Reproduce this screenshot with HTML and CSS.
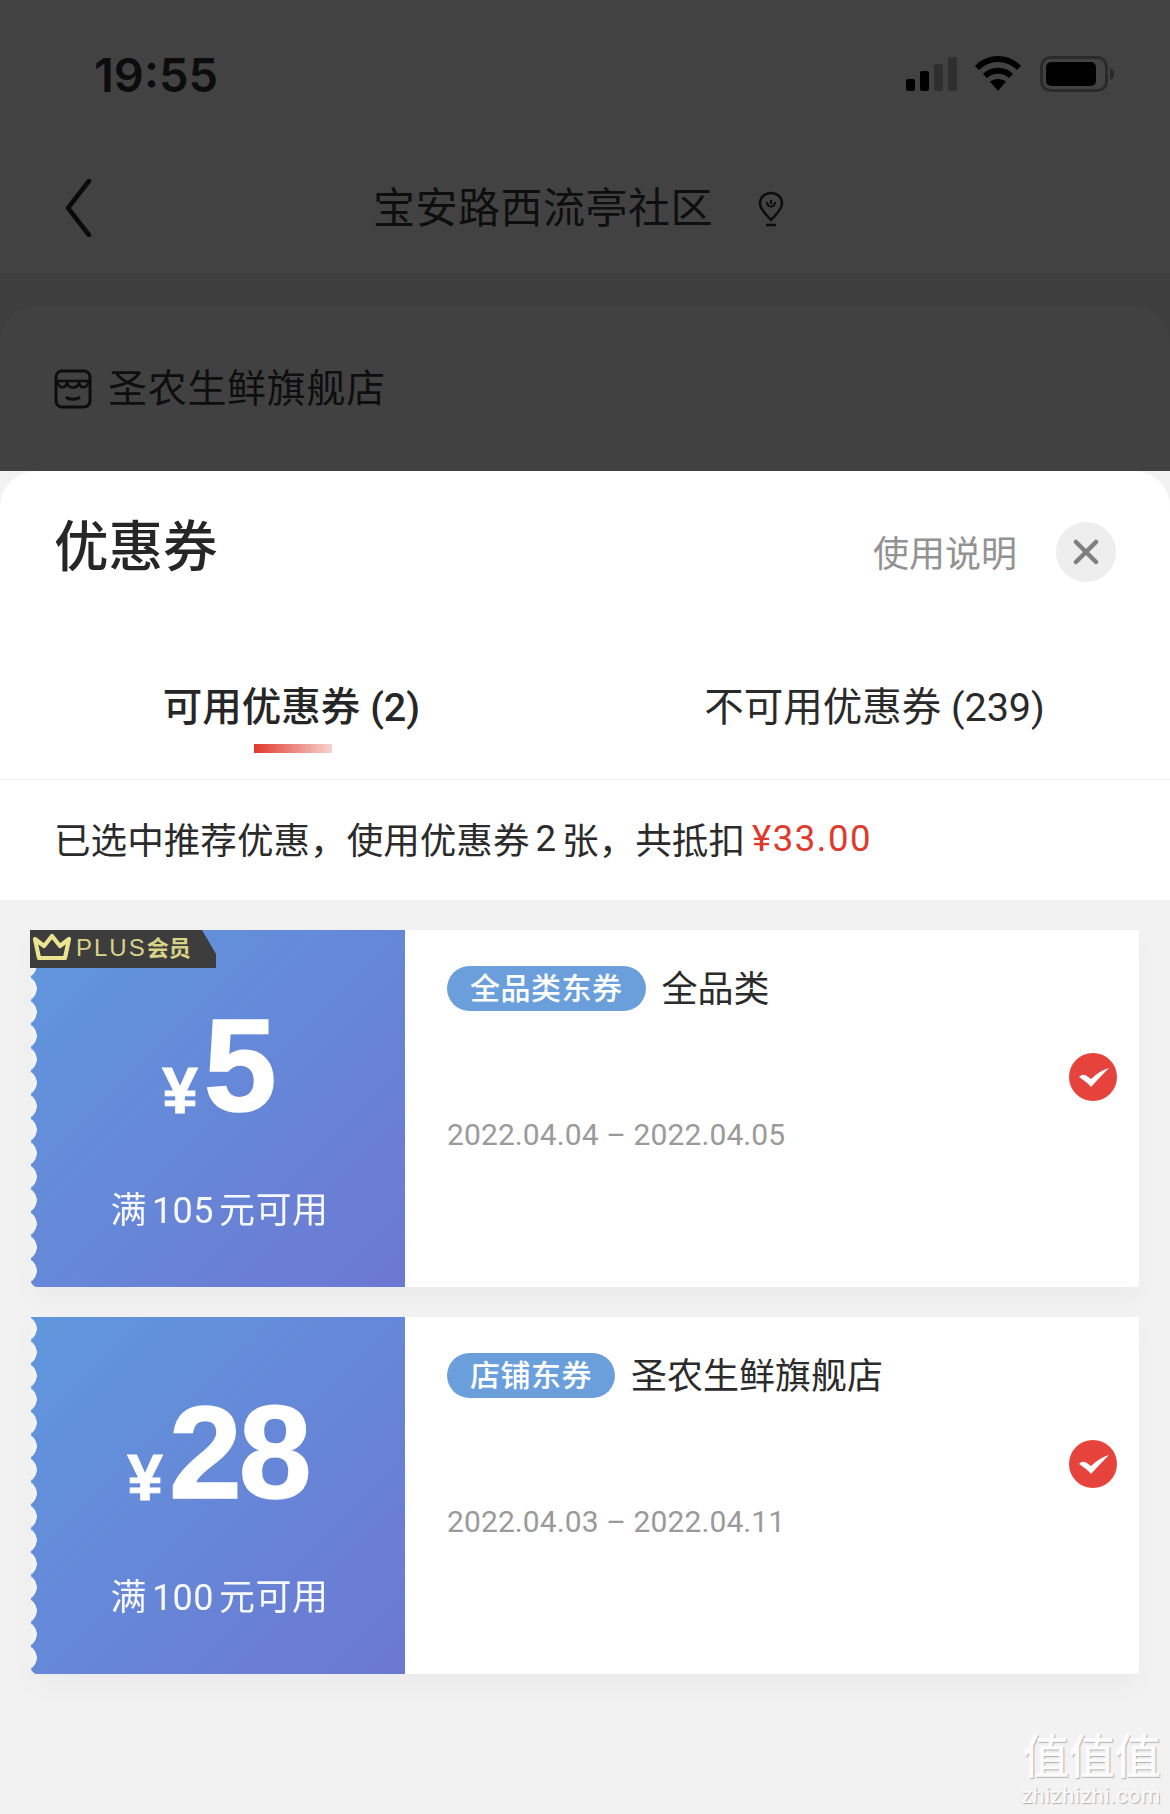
FILE: index.html
```html
<!DOCTYPE html>
<html lang="zh-CN">
<head>
<meta charset="utf-8">
<title>优惠券</title>
<link rel="stylesheet" href="styles.css">
</head>
<body>
<div class="page">
  <header class="backdrop">
    <div class="status">
      <span class="time">19:55</span>
      <div class="status-icons">
        <svg class="ic-signal" width="51" height="34" viewBox="0 0 51 34"><rect x="0" y="22" width="9" height="12" rx="2" fill="#000"/><rect x="14" y="14" width="9" height="20" rx="2" fill="#000"/><rect x="28" y="7" width="9" height="27" rx="2" fill="#2f2f2f"/><rect x="42" y="0" width="9" height="34" rx="2" fill="#2f2f2f"/></svg>
        <svg class="ic-wifi" width="48" height="37" viewBox="0 0 48 37"><path d="M3 13C15 1 33 1 45 13" fill="none" stroke="#000" stroke-width="6"/><path d="M11 21C18 14 30 14 37 21" fill="none" stroke="#000" stroke-width="6"/><path d="M16 26.500C20 23 28 23 32 26.500L24 36Z" fill="#000"/></svg>
        <svg class="ic-batt" width="74" height="36" viewBox="0 0 74 36"><rect x="1.500" y="1.500" width="65" height="33" rx="9" fill="none" stroke="#2a2a2a" stroke-width="3"/><rect x="6" y="6" width="50" height="24" rx="5" fill="#000"/><path d="M70 12C73 13 74 15 74 18C74 21 73 23 70 24Z" fill="#2a2a2a"/></svg>
      </div>
    </div>
    <nav class="nav">
      <svg class="ic-back" width="28" height="58" viewBox="0 0 28 58"><path d="M25 2L4 29L25 56" fill="none" stroke="#0a0a0a" stroke-width="4.500" stroke-linecap="round" stroke-linejoin="round"/></svg>
      <h2 class="nav-title">宝安路西流亭社区</h2>
      <svg class="ic-pin" width="30" height="36" viewBox="0 0 30 36"><path d="M15 2C8 2 4 7 4 12.500C4 19 11 24 15 29C19 24 26 19 26 12.500C26 7 22 2 15 2Z" fill="none" stroke="#0d0d0d" stroke-width="2.500"/><path d="M11 11C11 17 19 17 19 11M15 9V13" fill="none" stroke="#0d0d0d" stroke-width="2.200"/><path d="M10 34H20" stroke="#0d0d0d" stroke-width="2.500"/></svg>
    </nav>
    <div class="store-wrap">
      <div class="store">
        <svg class="ic-store" width="38" height="40" viewBox="0 0 38 40"><rect x="2" y="2" width="34" height="36" rx="6" fill="none" stroke="#0d0d0d" stroke-width="3"/><path d="M2 12H36M3 12C5 20 11 20 13 14C15 20 23 20 25 14C27 20 33 20 35 12" fill="none" stroke="#0d0d0d" stroke-width="2.600"/><path d="M12 28C15 31 23 31 26 28" fill="none" stroke="#0d0d0d" stroke-width="3"/></svg>
        <span class="store-name">圣农生鲜旗舰店</span>
      </div>
    </div>
  </header>

  <main class="sheet">
    <div class="sheet-head">
      <h1 class="sheet-title">优惠券</h1>
      <span class="help">使用说明</span>
      <button class="close" type="button" aria-label="关闭">
        <svg width="26" height="26" viewBox="0 0 26 26"><path d="M3 3L23 23M23 3L3 23" stroke="#7f7f7f" stroke-width="4.500" stroke-linecap="round"/></svg>
      </button>
    </div>
    <div class="tabs">
      <div class="tab tab-on"><span class="tab-label">可用优惠券 (2)</span><i class="tab-bar"></i></div>
      <div class="tab"><span class="tab-label">不可用优惠券 (239)</span></div>
    </div>
    <div class="summary">已选中推荐优惠，使用优惠券<span class="num">2</span>张，共抵扣<span class="amount">¥33.00</span></div>
    <div class="list">
      <article class="coupon">
        <div class="badge">
          <svg width="40" height="28" viewBox="0 0 40 28"><path d="M3 6L12 13L20 3L28 13L37 6L33 25H7Z" fill="none" stroke="#ebe491" stroke-width="4.200" stroke-linejoin="round"/></svg>
          <span class="badge-text">PLUS<b>会员</b></span>
        </div>
        <div class="face">
          <div class="value"><span class="yen">¥</span><span class="figure">5</span></div>
          <div class="rule">满<span class="num">105</span>元可用</div>
        </div>
        <div class="detail">
          <div class="info">
            <div class="heading"><span class="tag">全品类东券</span><span class="scope">全品类</span></div>
            <div class="dates">2022.04.04 – 2022.04.05</div>
          </div>
          <svg class="check" width="48" height="48" viewBox="0 0 48 48"><circle cx="24" cy="24" r="24" fill="#e5433b"/><path d="M10 24Q13 20.500 17 22.500L22 26Q30 18 40 15Q32 23 22 34Q19 30 10 24Z" fill="#fff"/></svg>
        </div>
      </article>
      <article class="coupon">
        <div class="face">
          <div class="value"><span class="yen">¥</span><span class="figure">28</span></div>
          <div class="rule">满<span class="num">100</span>元可用</div>
        </div>
        <div class="detail">
          <div class="info">
            <div class="heading"><span class="tag">店铺东券</span><span class="scope">圣农生鲜旗舰店</span></div>
            <div class="dates">2022.04.03 – 2022.04.11</div>
          </div>
          <svg class="check" width="48" height="48" viewBox="0 0 48 48"><circle cx="24" cy="24" r="24" fill="#e5433b"/><path d="M10 24Q13 20.500 17 22.500L22 26Q30 18 40 15Q32 23 22 34Q19 30 10 24Z" fill="#fff"/></svg>
        </div>
      </article>
    </div>
  </main>

  <div class="watermark"><span class="wm-mark">值值值</span><span class="wm-url">zhizhizhi.com</span></div>
</div>
</body>
</html>
```
FILE: styles.css
```css
* { box-sizing: border-box; margin: 0; padding: 0; }
html, body { width: 1170px; height: 1814px; overflow: hidden; }
body {
  font-family: Roboto, "Noto Sans CJK SC", sans-serif;
  color: #262626;
  background: #f2f2f2;
}
.page { position: relative; width: 1170px; height: 1814px; display: flex; flex-direction: column; }

/* dimmed page behind the sheet */
.backdrop { height: 471px; flex: none; background: #424242; display: flex; flex-direction: column; }
.status { height: 146px; flex: none; display: flex; justify-content: space-between; align-items: flex-start; padding: 49px 56px 0 94px; }
.time { font-family: Inter, sans-serif; font-weight: 600; font-size: 47px; line-height: 52px; color: #0c0c0c; }
.status-icons { display: flex; align-items: flex-start; padding-top: 8px; }
.ic-wifi { margin-left: 17px; margin-top: -2px; }
.ic-batt { margin-left: 18px; margin-top: -1px; }
.nav { height: 127px; flex: none; display: flex; align-items: center; padding: 0 0 4px 64px; }
.ic-back { flex: none; }
.nav-title { font-weight: 400; font-size: 42px; line-height: 60px; color: #0e0e0e; margin-left: 281px; padding-top: 2px; letter-spacing: 0.5px; }
.ic-pin { margin-left: 43px; margin-top: 2px; }
.store-wrap { flex: 1; background: #3e3e3e; padding-top: 33px; display: flex; }
.store { flex: 1; border-radius: 36px 36px 0 0; background: #414141; display: flex; align-items: center; padding-left: 54px; }
.store-name { font-size: 39px; line-height: 56px; color: #0e0e0e; margin-left: 16px; letter-spacing: 0.7px; }

/* sheet */
.sheet { flex: 1; position: relative; background: #f2f2f2; border-radius: 36px 36px 0 0; overflow: hidden; display: flex; flex-direction: column; }
.sheet-head { height: 170px; flex: none; background: #fff; display: flex; align-items: flex-start; padding: 36px 54px 0 54px; }
.sheet-title { font-size: 54.500px; font-weight: 500; line-height: 80px; color: #262626; flex: 1; }
.help { font-size: 36px; line-height: 52px; color: #929292; margin-top: 22px; }
.close { width: 60px; height: 60px; border: 0; border-radius: 50%; background: #eeeeee; margin: 15px 0 0 39px; display: flex; align-items: center; justify-content: center; }

.tabs { height: 139px; flex: none; background: #fff; border-bottom: 1px solid #f2f2f2; display: flex; padding-right: 4px; }
.tab { flex: 1; display: flex; flex-direction: column; align-items: center; padding-top: 42px; }
.tab-label { font-size: 39.500px; line-height: 50px; color: #2a2a2a; }
.tab-on .tab-label { font-weight: 500; color: #262626; }
.tab-bar { display: block; width: 78px; height: 9px; margin: 11px 0 0 2px; background: linear-gradient(90deg, #e0392c, #f7d3cf); }

.summary { height: 120px; flex: none; background: #fff; display: flex; align-items: center; padding: 0 0 3px 54px; font-size: 36.600px; color: #2b2b2b; }
.summary .num { margin: 0 6px; }
.amount { color: #e0392d; margin-left: 7px; letter-spacing: 1.500px; }

.list { padding: 30px 31px 0; display: flex; flex-direction: column; gap: 30px; }
.coupon { position: relative; height: 357px; display: flex; box-shadow: 0 12px 24px rgba(0, 0, 0, 0.03); }
.face {
  width: 374px; flex: none; display: flex; flex-direction: column; align-items: center;
  background: linear-gradient(135deg, #6097dd, #6c78d2);
  border-radius: 0 0 0 5px;
  -webkit-mask: radial-gradient(circle 13px at -7px 50%, transparent 12.500px, #000 13px) left top / 100% 23.500px repeat-y;
  mask: radial-gradient(circle 13px at -7px 50%, transparent 12.500px, #000 13px) left top / 100% 23.500px repeat-y;
  color: #fff;
}
.value { display: flex; align-items: flex-end; height: 132px; margin-top: 70px; font-family: "Liberation Sans", sans-serif; font-weight: 700; }
.yen { font-size: 64px; line-height: 62px; margin: 0 6px 10px 0; -webkit-text-stroke: 1px #fff; }
.figure { font-size: 131px; line-height: 132px; letter-spacing: -3px; -webkit-text-stroke: 1.500px #fff; }
.rule { margin-top: 53px; padding-left: 3px; font-size: 36px; line-height: 52px; letter-spacing: 0.5px; color: #f6f8fd; }
.rule .num { margin: 0 5px; }

.detail { flex: 1; display: flex; justify-content: space-between; padding: 36px 22px 0 42px; background: #fff; }
.heading { display: flex; align-items: center; height: 45px; }
.tag { height: 45px; line-height: 45px; padding: 0 23px; border-radius: 23px; background: #6a9fdc; color: #fff; font-size: 30px; font-weight: 500; letter-spacing: 0.5px; }
.scope { font-size: 36px; line-height: 45px; padding-top: 4px; color: #2b2b2b; margin-left: 16px; }
.dates { margin-top: 104px; font-size: 30px; line-height: 40px; color: #9a9a9a; letter-spacing: 0.1px; }
.check { flex: none; margin-top: 87px; }

/* badge sits over the coupon face */
.badge {
  position: absolute; left: -1px; top: 0; z-index: 1; width: 186px; height: 38px;
  background: #3d3d3d; display: flex; align-items: center; padding-left: 2px;
  clip-path: polygon(0 0, 172px 0, 186px 24px, 186px 38px, 0 38px);
}
.badge svg { flex: none; margin-top: -4px; }
.badge-text { margin-left: 4px; font-family: "Liberation Sans", "Noto Sans CJK SC", sans-serif; font-size: 24px; line-height: 34px; margin-bottom: 4px; letter-spacing: 2px; color: #d9d388; white-space: nowrap; }
.badge-text b { font-family: "Noto Sans CJK SC", sans-serif; font-size: 22px; letter-spacing: 0; font-weight: 700; }

/* site watermark over the screenshot corner */
.watermark { position: absolute; right: 9px; bottom: 6px; width: 140px; display: flex; flex-direction: column; align-items: center; color: #fbfbfb; text-shadow: 1px 1px 1px rgba(0, 0, 0, 0.28); }
.wm-mark { font-size: 47px; font-weight: 500; line-height: 52px; margin-bottom: 1px; letter-spacing: -1px; white-space: nowrap; }
.wm-url { font-family: Roboto, sans-serif; font-size: 22px; line-height: 24px; white-space: nowrap; letter-spacing: 0.4px; }
```
